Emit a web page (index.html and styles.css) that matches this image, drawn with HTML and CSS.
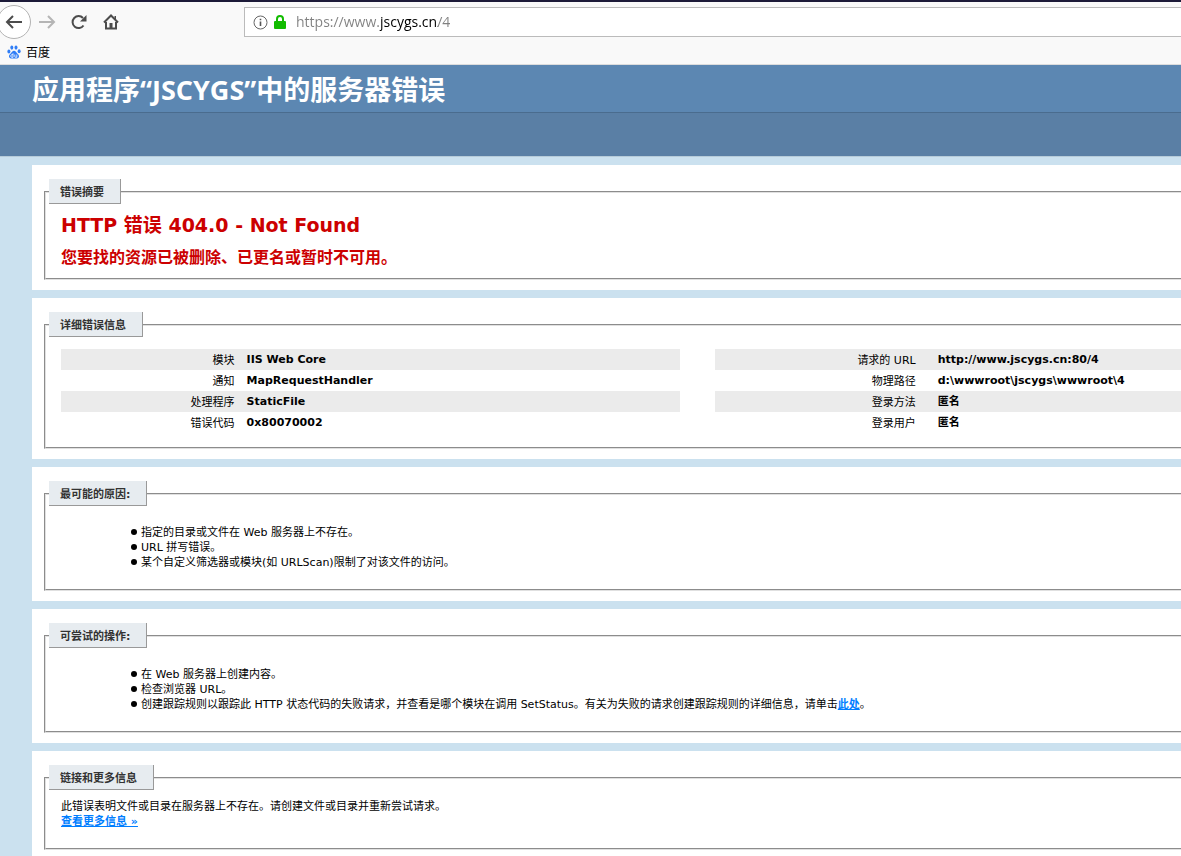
FILE: index.html
```html
<!DOCTYPE html>
<html lang="zh-CN">
<head>
  <meta charset="UTF-8" />
  <title>IIS 错误 404.0 - Not Found</title>
  <link rel="stylesheet" href="styles.css">
</head>
<body>
  <!-- Browser toolbar -->
  <div class="browser">
    <div class="nav-bar">
      <div class="nav-buttons">
        <button class="nav-btn back" type="button" aria-label="后退">
          <svg width="18" height="16" viewBox="0 0 18 16"><path d="M17 8H2M8 2L2 8l6 6" /></svg>
        </button>
        <button class="nav-btn forward" type="button" aria-label="前进">
          <svg width="18" height="16" viewBox="0 0 18 16"><path d="M1 8h15M10 2l6 6-6 6" /></svg>
        </button>
        <button class="nav-btn" type="button" aria-label="刷新">
          <svg width="16" height="16" viewBox="0 0 16 16"><path d="M12.5 11.5A6 6 0 1 1 12 4" /><path class="solid" d="M15.5 1v6.500H9z" /></svg>
        </button>
        <button class="nav-btn" type="button" aria-label="主页">
          <svg width="16" height="16" viewBox="0 0 16 16"><path d="M1 8.500L8 1.500l7 7M3 8v6.500h10V8" /><path class="solid" d="M6.500 9h3v5.500h-3zM11.500 2H13v4l-1.500-1.500z" /></svg>
        </button>
      </div>
      <div class="url-bar">
        <svg width="15" height="15" viewBox="0 0 15 15"><circle cx="7.500" cy="7.500" r="6.500" fill="none" stroke="#666" /><path d="M6.700 6.500h1.600V11H6.700zM6.700 3.700h1.600v1.600H6.700z" fill="#555" /></svg>
        <svg width="12" height="14" viewBox="0 0 12 14"><path d="M3 7V4a3 3 0 0 1 6 0v3" fill="none" stroke="#12bc00" stroke-width="2" /><rect y="6" width="12" height="8" rx="1" fill="#12bc00" /></svg>
        <input class="url" type="text" value="https://www.jscygs.cn/4" aria-label="地址">
      </div>
    </div>
    <div class="bookmarks">
      <a class="bookmark" href="#">
        <svg width="14" height="14" viewBox="0 0 14 14" fill="#2f7df6"><ellipse cx="1.900" cy="6.500" rx="1.500" ry="2" /><ellipse cx="4.800" cy="2.600" rx="1.500" ry="2.100" /><ellipse cx="9" cy="2.600" rx="1.500" ry="2.100" /><ellipse cx="12.100" cy="6.200" rx="1.500" ry="2" /><path d="M7 5.800c1.700 0 2.100 1.500 3.300 2.600 1.300 1.100 2 2.100 1.600 3.600-.6 2-2.800 1.600-4.900 1.500-2 .1-4.300.5-4.900-1.500-.4-1.500.3-2.500 1.600-3.600C4.900 7.300 5.300 5.800 7 5.800z" /><path d="M6 8.300v4H4.800c-1.400 0-1.400-2.600 0-2.600H6M7.800 9.500v2c0 .6.300.8.800.8h1.200V9.500" fill="none" stroke="#fff" stroke-width=".8" /></svg>
        百度
      </a>
    </div>
  </div>

  <!-- Error page -->
  <div class="page">
    <div class="header"><h1>应用程序“JSCYGS”中的服务器错误</h1></div>
    <div class="sub-header"></div>
    <div class="content">

      <div class="card">
        <fieldset class="summary">
          <legend>错误摘要</legend>
          <h2>HTTP 错误 404.0 - Not Found</h2>
          <h3>您要找的资源已被删除、已更名或暂时不可用。</h3>
        </fieldset>
      </div>

      <div class="card">
        <fieldset class="details">
          <legend>详细错误信息</legend>
          <div class="tables">
            <table class="left">
              <tr class="alt"><th>模块</th><td>IIS Web Core</td></tr>
              <tr><th>通知</th><td>MapRequestHandler</td></tr>
              <tr class="alt"><th>处理程序</th><td>StaticFile</td></tr>
              <tr><th>错误代码</th><td>0x80070002</td></tr>
            </table>
            <table class="right">
              <tr class="alt"><th>请求的 URL</th><td>http://www.jscygs.cn:80/4</td></tr>
              <tr><th>物理路径</th><td>d:\wwwroot\jscygs\wwwroot\4</td></tr>
              <tr class="alt"><th>登录方法</th><td>匿名</td></tr>
              <tr><th>登录用户</th><td>匿名</td></tr>
            </table>
          </div>
        </fieldset>
      </div>

      <div class="card">
        <fieldset class="causes">
          <legend>最可能的原因:</legend>
          <ul>
            <li>指定的目录或文件在 Web 服务器上不存在。</li>
            <li>URL 拼写错误。</li>
            <li>某个自定义筛选器或模块(如 URLScan)限制了对该文件的访问。</li>
          </ul>
        </fieldset>
      </div>

      <div class="card">
        <fieldset class="causes">
          <legend>可尝试的操作:</legend>
          <ul>
            <li>在 Web 服务器上创建内容。</li>
            <li>检查浏览器 URL。</li>
            <li>创建跟踪规则以跟踪此 HTTP 状态代码的失败请求，并查看是哪个模块在调用 SetStatus。有关为失败的请求创建跟踪规则的详细信息，请单击<a href="#">此处</a>。</li>
          </ul>
        </fieldset>
      </div>

      <div class="card">
        <fieldset class="more">
          <legend>链接和更多信息</legend>
          <p>此错误表明文件或目录在服务器上不存在。请创建文件或目录并重新尝试请求。</p>
          <p><a href="#">查看更多信息 »</a></p>
        </fieldset>
      </div>

    </div>
  </div>
</body>
</html>
```

FILE: styles.css
```css
* {
  box-sizing: border-box;
}
body {
  margin: 0;
  height: 100vh;
  overflow: hidden;
  background: #cbe1ef;
  color: #000;
  font-family: "DejaVu Sans", "Noto Sans CJK SC", sans-serif;
  font-size: 11px;
  line-height: 15px;
}
h1, h2, h3, p, ul {
  margin: 0;
}
a {
  color: #007eff;
  font-weight: bold;
}

/* browser */
.browser {
  height: 65px;
  background: #f9f9f9;
  border-top: 2px solid #1c1a38;
  border-bottom: 1px solid #ddd;
}
.nav-bar {
  display: flex;
  align-items: center;
  height: 40px;
}
.nav-buttons {
  display: flex;
  width: 244px;
}
.nav-btn {
  display: flex;
  align-items: center;
  justify-content: center;
  width: 32px;
  height: 34px;
  padding: 0;
  border: none;
  background: none;
}
.nav-btn svg {
  fill: none;
  stroke: #4c4c4c;
  stroke-width: 2;
}
.nav-btn .solid {
  fill: #4c4c4c;
  stroke: none;
}
.nav-btn.back {
  width: 34px;
  margin-left: -3px;
  border: 1px solid #b3b3b3;
  border-radius: 50%;
  background: #fff;
}
.nav-btn.forward svg {
  stroke: #b5b5b5;
}
.url-bar {
  flex: 1;
  display: flex;
  align-items: center;
  gap: 6px;
  height: 30px;
  padding-left: 8px;
  border: 1px solid #bbb;
  border-right: none;
  background: #fff;
}
.url {
  flex: 1;
  margin-left: 4px;
  padding: 0;
  border: none;
  outline: none;
  /* the host name is darker than the rest of the address */
  background: linear-gradient(90deg, #808080 84px, #000 84px, #000 142px, #808080 142px);
  -webkit-background-clip: text;
  background-clip: text;
  color: transparent;
  font-family: "Open Sans", sans-serif;
  font-size: 14px;
  line-height: 20px;
}
.bookmarks {
  padding: 1px 7px;
}
.bookmark {
  display: inline-flex;
  align-items: center;
  gap: 5px;
  color: #000;
  font-family: "Noto Sans CJK SC", sans-serif;
  font-size: 12px;
  font-weight: normal;
  line-height: 18px;
  text-decoration: none;
}

/* error page, wider than the window */
.page {
  width: 160%;
}
.header {
  height: 47px;
  padding-left: 32px;
  background: #5c87b2;
}
.header h1 {
  color: #fff;
  font-family: "Open Sans", "Noto Sans CJK SC", sans-serif;
  font-size: 27px;
  line-height: 50px;
}
.sub-header {
  height: 45px;
  border-top: 1px solid #4a6c8e;
  border-bottom: 1px solid #b6cbd9;
  background: #5a7fa5;
}
.content {
  display: flex;
  flex-direction: column;
  gap: 8px;
  padding: 8px 32px;
}
.card {
  padding: 14px 12px 10px;
  background: #fff;
}
fieldset {
  margin: 0;
  padding: 0 15px;
  border: 2px groove #e0e0e0;
}
legend {
  margin-left: -12px;
  padding: 6px 16px 3px 11px;
  border-right: 1px solid #999;
  border-bottom: 1px solid #999;
  background: #e7ecf0;
  color: #333;
  font-weight: bold;
}
.summary {
  padding-top: 9px;
  padding-bottom: 10px;
}
.summary h2 {
  margin-bottom: 11px;
  color: #c00;
  font-size: 19px;
  line-height: 24px;
}
.summary h3 {
  color: #c00;
  font-size: 16px;
  line-height: 20px;
}
.details {
  padding-top: 12px;
  padding-bottom: 14px;
}
.tables {
  display: flex;
  gap: 2%;
}
table {
  table-layout: fixed;
  border-collapse: collapse;
}
.left {
  width: 35%;
}
.right {
  width: 63%;
}
.alt {
  background: #ebebeb;
}
th, td {
  height: 21px;
  padding: 1px 0 0;
  line-height: 19px;
  vertical-align: top;
}
th {
  width: 30%;
  padding: 2px 12px 0 0;
  font-weight: normal;
  text-align: right;
}
.right th {
  width: 20%;
  padding-right: 22px;
}
td {
  font-weight: bold;
}
.causes {
  padding-top: 19px;
  padding-bottom: 19px;
}
.causes ul {
  padding-left: 80px;
  list-style: none;
}
.causes li::before {
  content: "";
  display: inline-block;
  width: 6px;
  height: 6px;
  margin: 0 4px 1px -10px;
  border-radius: 50%;
  background: #000;
}
.more {
  padding-top: 9px;
  padding-bottom: 19px;
}
```
